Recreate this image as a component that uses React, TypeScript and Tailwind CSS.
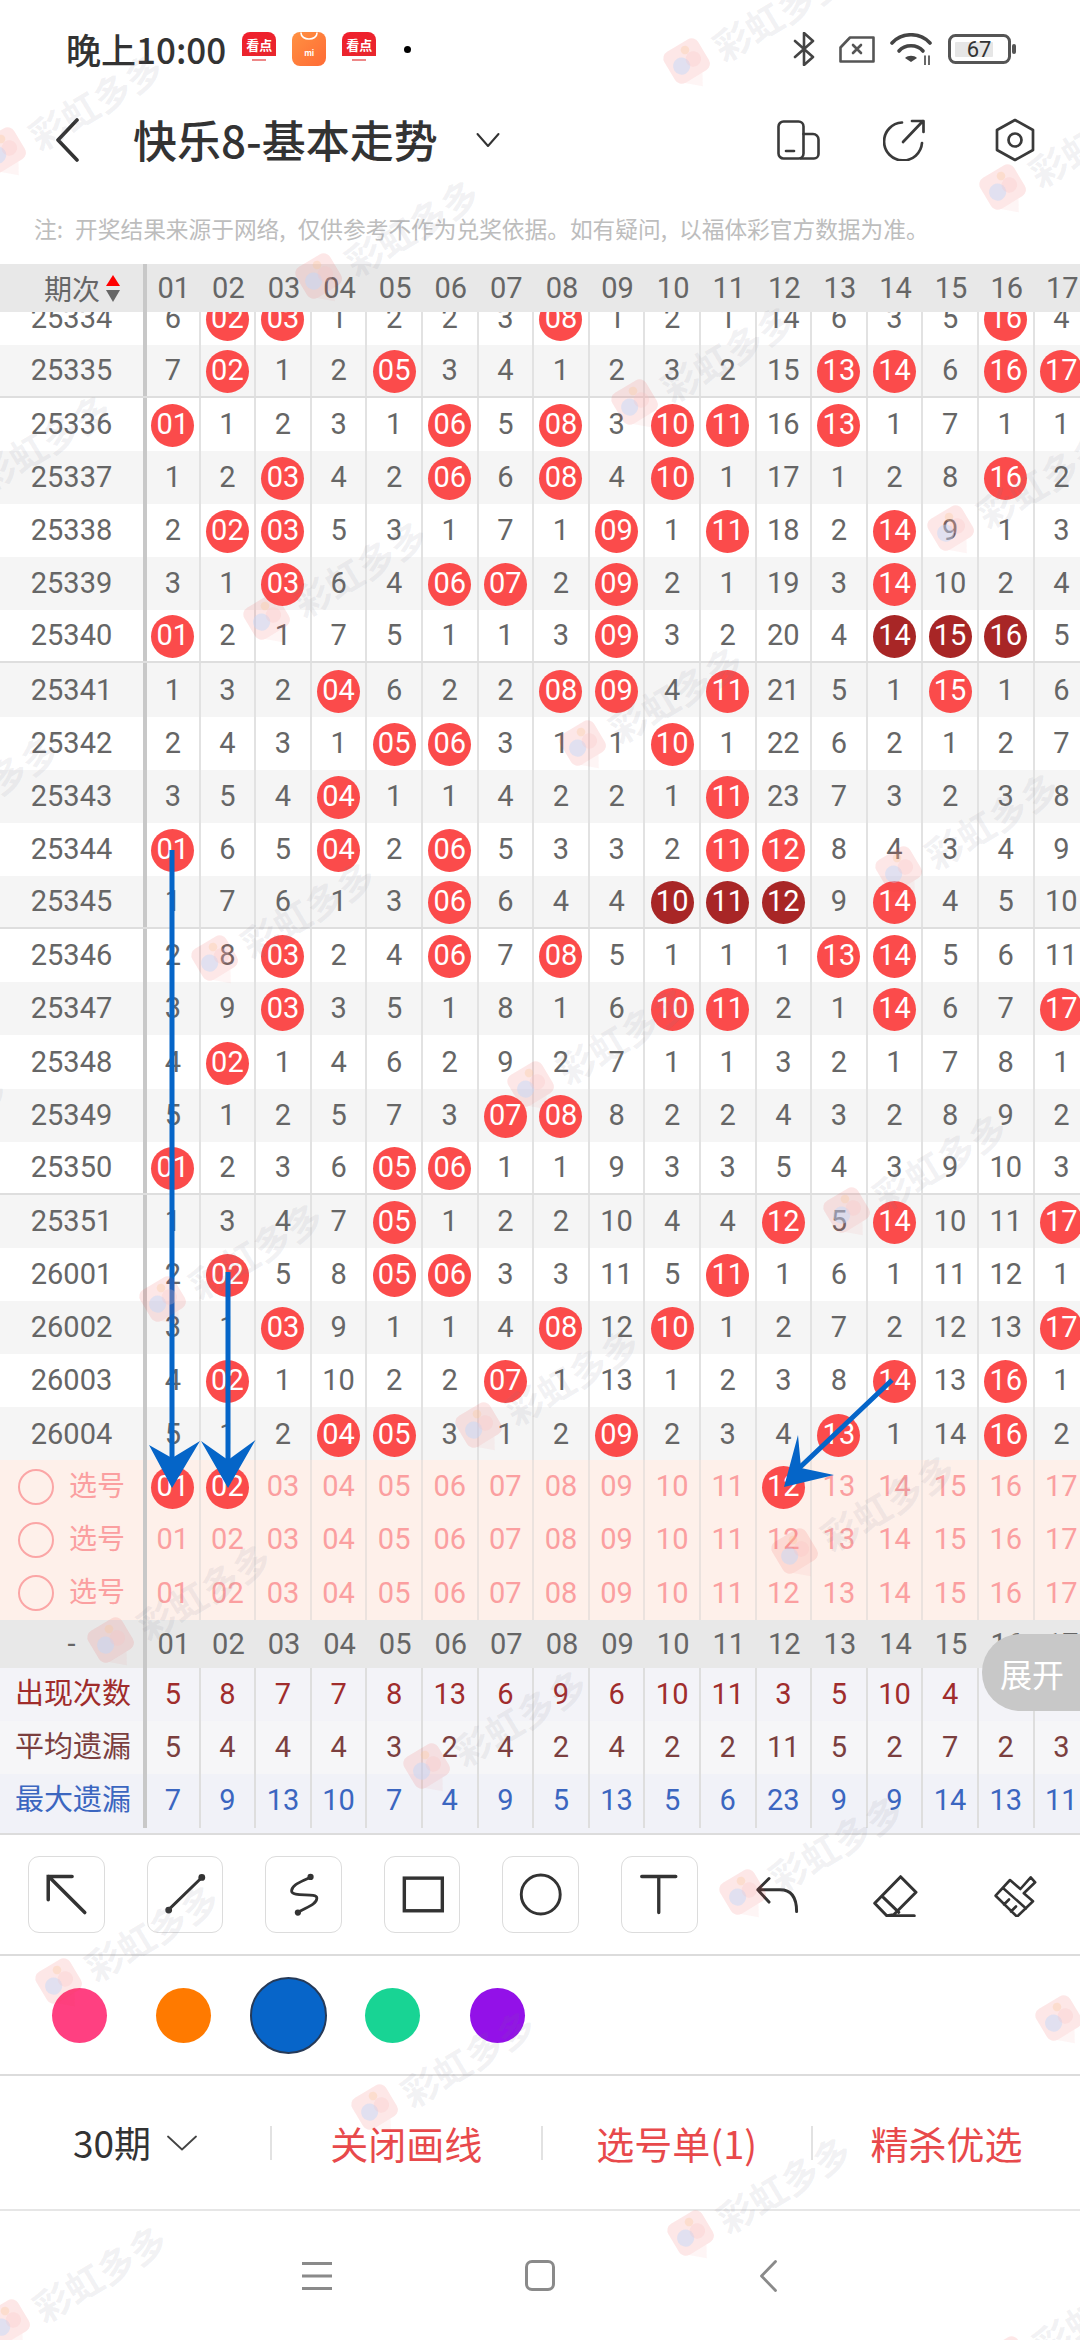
import React from "react";

const rows: [string, string][] = [
  ["25334", "6 r r 1 2 2 3 r 1 2 1 14 6 3 5 r 4"],
  ["25335", "7 r 1 2 r 3 4 1 2 3 2 15 r r 6 r r"],
  ["25336", "r 1 2 3 1 r 5 r 3 r r 16 r 1 7 1 1"],
  ["25337", "1 2 r 4 2 r 6 r 4 r 1 17 1 2 8 r 2"],
  ["25338", "2 r r 5 3 1 7 1 r 1 r 18 2 r 9 1 3"],
  ["25339", "3 1 r 6 4 r r 2 r 2 1 19 3 r 10 2 4"],
  ["25340", "r 2 1 7 5 1 1 3 r 3 2 20 4 d d d 5"],
  ["25341", "1 3 2 r 6 2 2 r r 4 r 21 5 1 r 1 6"],
  ["25342", "2 4 3 1 r r 3 1 1 r 1 22 6 2 1 2 7"],
  ["25343", "3 5 4 r 1 1 4 2 2 1 r 23 7 3 2 3 8"],
  ["25344", "r 6 5 r 2 r 5 3 3 2 r r 8 4 3 4 9"],
  ["25345", "1 7 6 1 3 r 6 4 4 d d d 9 r 4 5 10"],
  ["25346", "2 8 r 2 4 r 7 r 5 1 1 1 r r 5 6 11"],
  ["25347", "3 9 r 3 5 1 8 1 6 r r 2 1 r 6 7 r"],
  ["25348", "4 r 1 4 6 2 9 2 7 1 1 3 2 1 7 8 1"],
  ["25349", "5 1 2 5 7 3 r r 8 2 2 4 3 2 8 9 2"],
  ["25350", "r 2 3 6 r r 1 1 9 3 3 5 4 3 9 10 3"],
  ["25351", "1 3 4 7 r 1 2 2 10 4 4 r 5 r 10 11 r"],
  ["26001", "2 r 5 8 r r 3 3 11 5 r 1 6 1 11 12 1"],
  ["26002", "3 1 r 9 1 1 4 r 12 r 1 2 7 2 12 13 r"],
  ["26003", "4 r 1 10 2 2 r 1 13 1 2 3 8 r 13 r 1"],
  ["26004", "5 1 2 r r 3 1 2 r 2 3 4 r 1 14 r 2"],
];

const nums = Array.from({ length: 17 }, (_, i) => String(i + 1).padStart(2, "0"));
const ruled = new Set(["25335", "25340", "25345", "25350"]);

function Ball({ n, dark }: { n: string; dark?: boolean }) {
  return (
    <span
      className={`flex h-[43px] w-[43px] shrink-0 translate-y-[1px] items-center justify-center rounded-full text-white ${
        dark ? "bg-[#a82626]" : "bg-[#fb4b4b]"
      }`}
    >
      <span className="-translate-y-[1px]">{n}</span>
    </span>
  );
}

function Cell({ i, line, children }: { i: number; line: string; children?: React.ReactNode }) {
  return (
    <div
      className={`flex h-full shrink-0 items-center justify-center border-r-2 ${line} ${
        i === 0 ? "w-[53.6px]" : "w-[55.6px]"
      }`}
    >
      {children}
    </div>
  );
}

function PlainCell({ i, children }: { i: number; children?: React.ReactNode }) {
  return (
    <div className={`flex h-full shrink-0 items-center justify-center ${i === 0 ? "w-[53.6px]" : "w-[55.6px]"}`}>
      {children}
    </div>
  );
}

function NumberBand() {
  return (
    <>
      {nums.map((n, i) => (
        <PlainCell key={n} i={i}>
          {n}
        </PlainCell>
      ))}
    </>
  );
}

function DataRow({ label, data, index }: { label: string; data: string; index: number }) {
  const cells = data.split(" ");
  return (
    <div
      className={`flex h-[53.15px] items-center text-[#666] ${index % 2 ? "bg-[#f5f5f5]" : "bg-white"} ${
        ruled.has(label) ? "border-b-2 border-[#dedede]" : ""
      }`}
    >
      <div className="flex h-full w-[147px] shrink-0 items-center justify-center border-r-4 border-[#c8c8c8]">{label}</div>
      {cells.map((c, i) => (
        <Cell key={i} i={i} line="border-[#e2e2e2]">
          {c === "r" ? <Ball n={nums[i]} /> : c === "d" ? <Ball n={nums[i]} dark /> : c}
        </Cell>
      ))}
    </div>
  );
}

function SelectRow({ balls }: { balls: number[] }) {
  return (
    <div className="flex h-[53.3px] items-center text-[#fb9fa0]">
      <div className="flex h-full w-[147px] shrink-0 items-center border-r-4 border-[#c8c8c8] pl-[18px]">
        <span className="h-[36px] w-[36px] rounded-full border-2 border-[#fba6a6]" />
        <span className="ml-[15px] text-[28px]">选号</span>
      </div>
      {nums.map((n, i) => (
        <Cell key={n} i={i} line="border-[#ebe2de]">
          {balls.includes(i) ? <Ball n={n} /> : n}
        </Cell>
      ))}
    </div>
  );
}

function StatRow({ label, data, bg, color }: { label: string; data: string; bg: string; color: string }) {
  return (
    <div className={`flex h-[53.2px] items-center ${bg} ${color}`}>
      <div className="flex h-full w-[147px] shrink-0 items-center border-r-4 border-[#c8c8c8] pl-[15px] text-[29px]">{label}</div>
      {data.split(" ").map((c, i) => (
        <Cell key={i} i={i} line="border-[#dedede]">
          {c}
        </Cell>
      ))}
    </div>
  );
}

function KanDian() {
  return (
    <div className="flex h-[34px] w-[34px] flex-col items-center overflow-hidden rounded-[8px] bg-white">
      <div className="flex h-[24px] w-full items-center justify-center bg-[linear-gradient(160deg,#f01f2d,#e8262c)] text-[13px] font-bold leading-none text-white">
        看点
      </div>
      <div className="mt-[3px] h-[2px] w-[14px] bg-[#e88]" />
    </div>
  );
}

function Tool({ children, boxed = true }: { children: React.ReactNode; boxed?: boolean }) {
  return (
    <div className="flex w-[118.6px] shrink-0 items-center justify-center">
      {boxed ? (
        <div className="h-[77px] w-[76.5px] rounded-[11px] border border-[#dcdcdc]">
          <svg viewBox="0 0 76 77" className="h-full w-full" fill="none" stroke="#333" strokeLinecap="round">
            {children}
          </svg>
        </div>
      ) : (
        <svg viewBox="0 -2.5 48 44" className="h-[44px] w-[48px]" fill="none" stroke="#333" strokeWidth="3" strokeLinecap="round" strokeLinejoin="round">
          {children}
        </svg>
      )}
    </div>
  );
}

function Watermark({ x, y }: { x: number; y: number }) {
  return (
    <div className="absolute h-0 w-0" style={{ left: x, top: y }}>
      <div className="absolute left-0 top-0 flex h-0 origin-left -rotate-[31deg] items-center">
        <svg viewBox="0 0 60 70" className="-ml-[26px] h-[60px] w-[52px] shrink-0">
          <rect x="6" y="8" width="46" height="42" rx="9" fill="rgba(239,68,68,0.13)" />
          <path d="M14 50h24l-8 14z" fill="rgba(239,68,68,0.05)" />
          <circle cx="21" cy="31" r="10" fill="rgba(190,215,250,0.45)" />
          <circle cx="37" cy="31" r="9" fill="rgba(250,190,190,0.25)" />
          <circle cx="34" cy="17" r="5" fill="rgba(253,200,150,0.3)" />
        </svg>
        <span className="ml-[4px] whitespace-nowrap text-[37px] font-bold leading-none text-[rgba(120,120,140,0.1)]">彩虹多多</span>
      </div>
    </div>
  );
}

const marks: { x: number; y: number }[] = [];
for (let n = -3; n <= 9; n++) {
  for (let m = -3; m <= 11; m++) {
    const x = 690 - 368 * n + 316 * m;
    const y = 65 + 215 * n + 126 * m;
    if (x > -200 && x < 1120 && y > -60 && y < 2400) marks.push({ x, y });
  }
}

export default function App() {
  return (
    <div className="relative flex h-[2340px] w-[1080px] flex-col overflow-hidden bg-white font-['Roboto','Noto_Sans_CJK_SC',sans-serif] text-[29px] leading-none">
      {/* status bar */}
      <div className="flex h-[98px] shrink-0 items-center pl-[66px] pr-[64px] font-['Noto_Sans_CJK_SC','Roboto',sans-serif]">
        <span className="-mt-[2px] text-[35px] font-medium text-[#333]">晚上10:00</span>
        <div className="ml-[16px] flex items-center gap-[16px]">
          <KanDian />
          <div className="flex h-[34px] w-[34px] flex-col items-center rounded-[8px] bg-[linear-gradient(135deg,#ff9142,#ff6b35)]">
            <svg viewBox="0 0 34 14" className="h-[14px] w-[34px]" fill="none" stroke="#fff" strokeWidth="1.6" strokeLinecap="round">
              <path d="M9 1c0 8 16 8 16 0" />
            </svg>
            <span className="mt-[3px] text-[8px] font-bold leading-none text-white">mi</span>
          </div>
          <KanDian />
        </div>
        <span className="ml-[28px] h-[7px] w-[7px] rounded-full bg-black" />
        <div className="ml-auto flex items-center">
          <svg viewBox="0 0 22 34" className="h-[34px] w-[22px]" fill="none" stroke="#444" strokeWidth="2.6" strokeLinejoin="round" strokeLinecap="round">
            <path d="M2 9l18 16-9 8V1l9 8L2 25" />
          </svg>
          <svg viewBox="0 0 36 27" className="ml-[24px] h-[27px] w-[36px]" fill="none" stroke="#555" strokeWidth="2.6" strokeLinejoin="round" strokeLinecap="round">
            <path d="M11 1.5h23.5v24H1.5V11.5z" />
            <path d="M14 9l8 8M22 9l-8 8" />
          </svg>
          <svg viewBox="0 0 42 32" className="ml-[15px] h-[32px] w-[42px]" fill="none" stroke="#444" strokeWidth="3.6" strokeLinecap="round">
            <path d="M2 10C12 -1 30 -1 40 10" />
            <path d="M9 18c6-7 18-7 24 0" />
            <path d="M15 25l6 4 6-4c-3-3-9-3-12 0z" fill="#444" stroke="none" />
            <path d="M35 23v9M39 23v9" strokeWidth="1.6" />
          </svg>
          <svg viewBox="0 0 68 30" className="ml-[16px] h-[30px] w-[68px]" fill="none">
            <rect x="1.5" y="1.5" width="60" height="27" rx="6" stroke="#555" strokeWidth="3" />
            <rect x="7" y="8" width="38" height="15" rx="1" fill="#e6e6e6" />
            <rect x="64" y="10" width="4" height="10" rx="2" fill="#555" />
            <text x="31" y="23" textAnchor="middle" fontSize="22" fill="#333" fontFamily="Roboto">67</text>
          </svg>
        </div>
      </div>

      {/* title bar */}
      <div className="flex h-[84px] shrink-0 items-center pl-[55px] pr-[45px] font-['Noto_Sans_CJK_SC','Roboto',sans-serif]">
        <svg viewBox="0 0 24 44" className="h-[44px] w-[24px]" fill="none" stroke="#333" strokeWidth="3.6" strokeLinecap="round" strokeLinejoin="round">
          <path d="M22 2L3 22l19 20" />
        </svg>
        <span className="-mt-[2px] ml-[54px] text-[44px] font-medium text-[#333]">快乐8-基本走势</span>
        <svg viewBox="0 0 24 16" className="ml-[38px] h-[16px] w-[24px]" fill="none" stroke="#333" strokeWidth="2" strokeLinecap="round" strokeLinejoin="round">
          <path d="M1.5 2L12 14 22.5 2" />
        </svg>
        <div className="ml-auto flex items-center">
          <svg viewBox="0 0 43 40" className="h-[40px] w-[43px]" fill="none" stroke="#3a3a3a" strokeWidth="2.6" strokeLinecap="round" strokeLinejoin="round">
            <rect x="1.5" y="1.5" width="25" height="37" rx="5" />
            <path d="M26.5 14H36a5.5 5.5 0 0 1 5.5 5.5V34a4.5 4.5 0 0 1-4.5 4.5H24" />
            <path d="M9 31h8" />
          </svg>
          <svg viewBox="0 0 42 42" className="ml-[63px] h-[42px] w-[42px]" fill="none" stroke="#3a3a3a" strokeWidth="2.7" strokeLinecap="round" strokeLinejoin="round">
            <path d="M19 3.5A19 19 0 1 0 39 24" />
            <path d="M20 23L40 2M29 2h11.5v11" />
          </svg>
          <svg viewBox="0 0 40 44" className="ml-[70px] h-[44px] w-[40px]" fill="none" stroke="#3a3a3a" strokeWidth="2.7" strokeLinejoin="round">
            <path d="M20 2l18 10v20L20 42 2 32V12z" />
            <circle cx="20" cy="22" r="6.5" />
          </svg>
        </div>
      </div>

      {/* note */}
      <div className="h-[82px] shrink-0 whitespace-nowrap pl-[34px] pt-[36px] font-['Noto_Sans_CJK_SC',sans-serif] text-[22.7px] leading-[22px] text-[#bdbdbd] [word-spacing:7px]">
        注: 开奖结果来源于网络, 仅供参考不作为兑奖依据。如有疑问, 以福体彩官方数据为准。
      </div>

      {/* table header */}
      <div className="flex h-[48px] shrink-0 items-center bg-[#e8e8e8] text-[#666]">
        <div className="flex h-full w-[147px] shrink-0 items-center border-r-4 border-[#c8c8c8] pl-[44px]">
          <span className="font-['Noto_Sans_CJK_SC',sans-serif] text-[28px]">期次</span>
          <svg viewBox="0 0 14 27" className="ml-[6px] h-[27px] w-[14px]">
            <path d="M7 0l7 11H0z" fill="#f00" />
            <path d="M0 15h14L7 27z" fill="#666" />
          </svg>
        </div>
        <NumberBand />
      </div>

      {/* scrolled rows */}
      <div className="h-[1148px] shrink-0 overflow-hidden">
        <div className="-mt-[20.5px]">
          {rows.map(([label, data], index) => (
            <DataRow key={label} label={label} data={data} index={index} />
          ))}
        </div>
      </div>

      {/* select rows */}
      <div className="h-[160px] shrink-0 bg-[#fef0ea]">
        <SelectRow balls={[0, 1, 11]} />
        <SelectRow balls={[]} />
        <SelectRow balls={[]} />
      </div>

      {/* number footer */}
      <div className="flex h-[48px] shrink-0 items-center bg-[#e8e8e8] text-[#666]">
        <div className="flex h-full w-[147px] shrink-0 items-center justify-center border-r-4 border-[#c8c8c8]">-</div>
        <NumberBand />
      </div>

      {/* statistics */}
      <div className="h-[167px] shrink-0 border-b-2 border-[#dcdcdc] bg-[#f1f2f8]">
        <StatRow label="出现次数" data="5 8 7 7 8 13 6 9 6 10 11 3 5 10 4 6 8" bg="bg-[#f3f3f8]" color="text-[#a02c2c]" />
        <StatRow label="平均遗漏" data="5 4 4 4 3 2 4 2 4 2 2 11 5 2 7 2 3" bg="bg-[#f6f6f8]" color="text-[#7b3f3f]" />
        <StatRow label="最大遗漏" data="7 9 13 10 7 4 9 5 13 5 6 23 9 9 14 13 11" bg="bg-[#f1f2f8]" color="text-[#3b66c0]" />
      </div>

      {/* drawing tools */}
      <div className="flex h-[121px] shrink-0 items-center border-b-2 border-[#dcdcdc] px-[7px]">
        <Tool>
          <path d="M19.5 44V20H44M20 20l37 37" strokeWidth="3.6" />
        </Tool>
        <Tool>
          <path d="M21 54L55 21" strokeWidth="3" />
          <circle cx="21" cy="54.5" r="3.5" fill="#333" stroke="none" />
          <circle cx="55" cy="21" r="3.5" fill="#333" stroke="none" />
        </Tool>
        <Tool>
          <path d="M45.5 20.5C38 25 26 28 26 35c0 7 26 1 26 7 0 7-12 10-19.5 15" strokeWidth="2.8" />
          <circle cx="45.5" cy="20.5" r="3.2" fill="#333" stroke="none" />
          <circle cx="32.5" cy="57" r="3.2" fill="#333" stroke="none" />
        </Tool>
        <Tool>
          <rect x="19.6" y="21.7" width="39" height="33.5" strokeWidth="3.5" />
        </Tool>
        <Tool>
          <circle cx="38.5" cy="38.5" r="20" strokeWidth="3" />
        </Tool>
        <Tool>
          <path d="M20 20h35M37.5 20v37" strokeWidth="3.4" />
        </Tool>
        <Tool boxed={false}>
          <path d="M15 3L3.7 14.3 15 26.6M3.7 14.3H26c11 0 16.6 7 16.6 21.7" />
        </Tool>
        <Tool boxed={false}>
          <path d="M28.6 1.2L44 16.8 21.7 39.2 14.8 40.2 2.7 27.8zM11.3 21.8l15.5 15M14.8 40.2h27.5" />
        </Tool>
        <Tool boxed={false}>
          <path d="M4.6 20.2L19 4.5l10.4 9L39.7 1.8l4.5 5L32.8 17.8l9.2 8L26 41.2zM12 12.5l23 20.5M13 29l5-5M20 36l5-5" strokeWidth="2.6" />
        </Tool>
      </div>

      {/* colours */}
      <div className="flex h-[120px] shrink-0 items-center border-b-2 border-[#dcdcdc] pl-[27px]">
        <div className="flex w-[104.5px] justify-center"><span className="h-[55px] w-[55px] rounded-full bg-[#ff4081]" /></div>
        <div className="flex w-[104.5px] justify-center"><span className="h-[55px] w-[55px] rounded-full bg-[#ff7a00]" /></div>
        <div className="flex w-[104.5px] justify-center"><span className="h-[77px] w-[77px] rounded-full border-2 border-[#263a58] bg-[#0765c9]" /></div>
        <div className="flex w-[104.5px] justify-center"><span className="h-[55px] w-[55px] rounded-full bg-[#18d494]" /></div>
        <div className="flex w-[104.5px] justify-center"><span className="h-[55px] w-[55px] rounded-full bg-[#9311e8]" /></div>
      </div>

      {/* actions */}
      <div className="flex h-[135px] shrink-0 items-center border-b-2 border-[#e6e6e6] font-['Noto_Sans_CJK_SC',sans-serif] text-[38px] text-[#e8494b]">
        <div className="flex w-[270px] shrink-0 items-center pl-[73px] text-[37px] text-[#333]">
          <span>30期</span>
          <svg viewBox="0 0 30 16" className="ml-[16px] h-[16px] w-[30px]" fill="none" stroke="#444" strokeWidth="1.8" strokeLinecap="round" strokeLinejoin="round">
            <path d="M1 1.5l14 13 14-13" />
          </svg>
        </div>
        <div className="flex h-[34px] w-[270.5px] items-center justify-center border-l-2 border-[#e2e2e2]">关闭画线</div>
        <div className="flex h-[34px] w-[270.5px] items-center justify-center border-l-2 border-[#e2e2e2]">选号单(1)</div>
        <div className="flex h-[34px] w-[269px] items-center justify-center border-l-2 border-[#e2e2e2]">精杀优选</div>
      </div>

      {/* navigation bar */}
      <div className="flex flex-1 items-center pl-[302px]">
        <svg viewBox="0 0 30 28" className="h-[28px] w-[30px]" fill="#8a8a8a">
          <rect y="0" width="30" height="3" />
          <rect y="12.5" width="30" height="3" />
          <rect y="25" width="30" height="3" />
        </svg>
        <span className="ml-[193px] h-[31px] w-[30px] rounded-[7px] border-[3px] border-[#8a8a8a]" />
        <svg viewBox="0 0 17 32" className="ml-[205px] h-[32px] w-[17px]" fill="none" stroke="#8a8a8a" strokeWidth="2.8" strokeLinecap="round" strokeLinejoin="round">
          <path d="M15.5 1.5L1.5 16l14 14.5" />
        </svg>
      </div>

      {/* hand-drawn arrows */}
      <svg viewBox="0 0 1080 2340" className="pointer-events-none absolute inset-0 h-full w-full">
        <path d="M172 850V1470M228 1272V1470M892 1380L795 1472" stroke="#0565c8" strokeWidth="5" fill="none" />
        <path d="M172 1488L149 1445 172 1458 200 1441z" fill="#0565c8" />
        <path d="M228 1488L201 1441 228 1460 255.5 1440z" fill="#0565c8" />
        <path d="M784 1487L798 1435 801 1468 834 1475z" fill="#0565c8" />
      </svg>

      {/* expand pill */}
      <div className="absolute left-[982px] top-[1634px] flex h-[77px] w-[98px] items-center rounded-l-[38px] bg-[#c8c8c8] pl-[18px] font-['Noto_Sans_CJK_SC',sans-serif] text-[32px] text-white">
        展开
      </div>

      {/* watermark */}
      <div className="pointer-events-none absolute inset-0 overflow-hidden font-['Noto_Sans_CJK_SC',sans-serif]">
        {marks.map((m, i) => (
          <Watermark key={i} x={m.x} y={m.y} />
        ))}
      </div>
    </div>
  );
}
